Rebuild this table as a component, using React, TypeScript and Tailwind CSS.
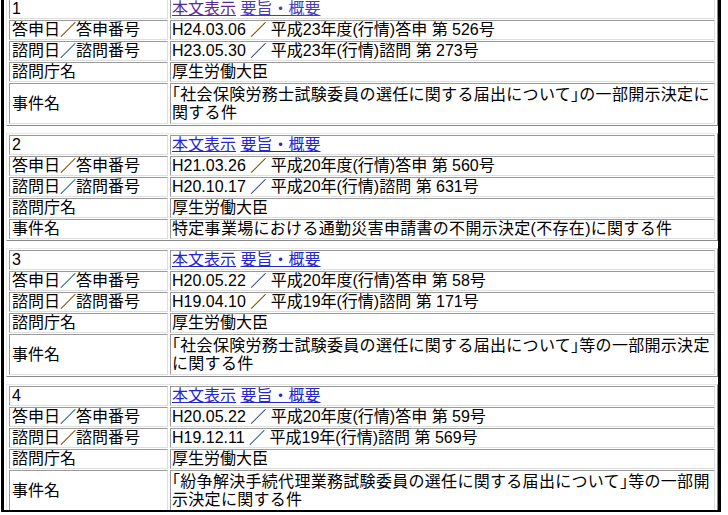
import React from "react";

type Rec = {
  no: string;
  visited?: boolean;
  toshin: string;
  shimon: string;
  cho: string;
  jiken: string[];
};

const recs: Rec[] = [
  {
    no: "1",
    visited: true,
    toshin: "H24.03.06 ／ 平成23年度(行情)答申 第 526号",
    shimon: "H23.05.30 ／ 平成23年(行情)諮問 第 273号",
    cho: "厚生労働大臣",
    jiken: ["「社会保険労務士試験委員の選任に関する届出について」の一部開示決定に", "関する件"],
  },
  {
    no: "2",
    toshin: "H21.03.26 ／ 平成20年度(行情)答申 第 560号",
    shimon: "H20.10.17 ／ 平成20年(行情)諮問 第 631号",
    cho: "厚生労働大臣",
    jiken: ["特定事業場における通勤災害申請書の不開示決定(不存在)に関する件"],
  },
  {
    no: "3",
    toshin: "H20.05.22 ／ 平成20年度(行情)答申 第 58号",
    shimon: "H19.04.10 ／ 平成19年(行情)諮問 第 171号",
    cho: "厚生労働大臣",
    jiken: ["「社会保険労務士試験委員の選任に関する届出について」等の一部開示決定", "に関する件"],
  },
  {
    no: "4",
    toshin: "H20.05.22 ／ 平成20年度(行情)答申 第 59号",
    shimon: "H19.12.11 ／ 平成19年(行情)諮問 第 569号",
    cho: "厚生労働大臣",
    jiken: ["「紛争解決手続代理業務試験委員の選任に関する届出について」等の一部開", "示決定に関する件"],
  },
];

const cell =
  "border border-t-[#9a9a9a] border-l-[#9a9a9a] border-b-[#dedede] border-r-[#dedede] p-0 align-middle whitespace-nowrap leading-[18px]";

function Row({ label, children, tall }: { label: React.ReactNode; children: React.ReactNode; tall?: boolean }) {
  return (
    <tr>
      <td className={`${cell} pl-[2px]`}>{label}</td>
      <td className={`${cell} pl-[1px] ${tall ? "pt-[2px] pb-[1px]" : ""}`}>{children}</td>
    </tr>
  );
}

export default function App() {
  return (
    <div
      className="w-[728px] h-[515px] bg-white overflow-hidden text-[16px] text-black"
      style={{ fontFamily: '"Liberation Sans", "Noto Sans CJK JP", sans-serif' }}
    >
      <div className="ml-[1px] w-[720px] h-[512px] border-l-[3px] border-r-[3px] border-b-[2px] border-black overflow-hidden pl-[2px]">
        <div className="-mt-[3px] flex flex-col gap-[7px]">
          {recs.map((r) => (
            <table
              key={r.no}
              className="table-fixed w-[712px] border-separate border-spacing-x-[2px] border-spacing-y-px border border-t-[#e8e8e8] border-l-[#e8e8e8] border-b-[#8a8a8a] border-r-[#8a8a8a]"
            >
              <colgroup>
                <col className="w-[159px]" />
                <col />
              </colgroup>
              <tbody>
                <Row label={r.no}>
                  <a
                    href="#"
                    className={`underline ${r.visited ? "text-[#5a2a9a]" : "text-[#2424d8]"}`}
                  >
                    本文表示
                  </a>{" "}
                  <a href="#" className={`underline ${r.visited ? "text-[#4a3ac0]" : "text-[#2424d8]"}`}>
                    要旨・概要
                  </a>
                </Row>
                <Row label="答申日／答申番号">{r.toshin}</Row>
                <Row label="諮問日／諮問番号">{r.shimon}</Row>
                <Row label="諮問庁名">{r.cho}</Row>
                <Row label="事件名" tall={r.jiken.length > 1}>
                  <span className="[font-feature-settings:'halt'] tracking-[0.3px]">
                    {r.jiken.map((l, i) => (
                      <React.Fragment key={i}>
                        {i > 0 && <br />}
                        {l}
                      </React.Fragment>
                    ))}
                  </span>
                </Row>
              </tbody>
            </table>
          ))}
        </div>
      </div>
    </div>
  );
}
